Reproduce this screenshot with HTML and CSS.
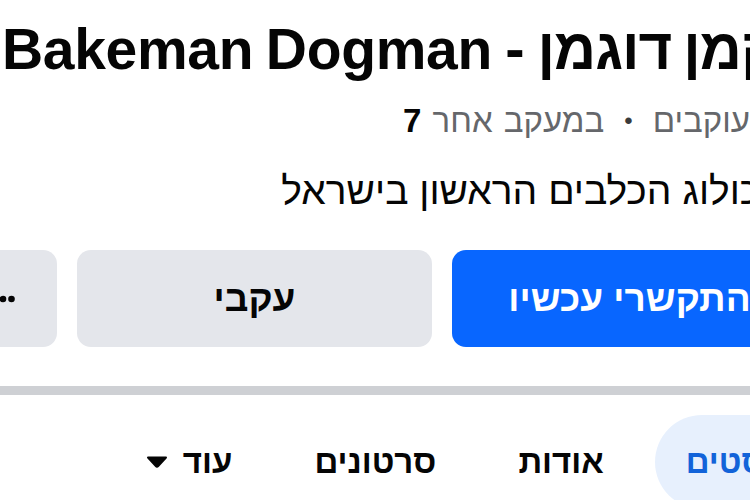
FILE: index.html
```html
<!DOCTYPE html>
<html lang="he">
<head>
<meta charset="utf-8">
<title>Bakeman Dogman</title>
<link rel="stylesheet" href="styles.css">
</head>
<body>
<div class="page">
  <h1 class="name"><span class="name-he">בייקמן דוגמן</span> - <span class="name-en">Bakeman Dogman</span></h1>
  <p class="stats"><b>8.4</b> עוקבים<span class="dot">•</span>במעקב אחר <b>7</b></p>
  <p class="bio">הכולוג הכלבים הראשון בישראל</p>
  <div class="actions">
    <button class="btn primary">התקשרי עכשיו</button>
    <button class="btn secondary">עקבי</button>
    <button class="btn more" aria-label="עוד">
      <svg class="dots" width="24" height="8" viewBox="0 0 24 8"><circle cx="3.5" cy="4" r="3.3"/><circle cx="12" cy="4" r="3.3"/><circle cx="20.5" cy="4" r="3.3"/></svg>
    </button>
  </div>
</div>
<div class="divider"></div>
<nav class="tabs">
  <span class="tab active">פוסטים</span>
  <span class="tab">אודות</span>
  <span class="tab">סרטונים</span>
  <span class="tab">עוד<svg class="caret" width="22" height="12" viewBox="0 0 22 12"><path d="M2 1.5 H20 L12.2 10 Q11 11.3 9.8 10 Z" stroke="#050505" stroke-width="2" stroke-linejoin="round"/></svg></span>
</nav>
</body>
</html>
```

FILE: styles.css
```css
html, body {
  margin: 0;
  padding: 0;
  background: #ffffff;
  overflow: hidden;
}

body {
  font-family: "Liberation Sans", Arial, "DejaVu Sans", sans-serif;
  color: #050505;
}

.page {
  direction: rtl;
  margin-right: -57px;
}

.name {
  margin: 16px -40px 0 0;
  font-size: 58px;
  line-height: 66px;
  font-weight: 700;
  word-spacing: -3px;
  white-space: nowrap;
}

.name-he {
  letter-spacing: -1px;
}

.name-en {
  font-size: 57px;
  letter-spacing: -0.3px;
}

.stats {
  margin: 19px 0 0;
  font-size: 33px;
  line-height: 40px;
  word-spacing: 2px;
  color: #65676b;
  white-space: nowrap;
}

.stats b {
  color: #050505;
}

.dot {
  margin: 0 20px;
  font-size: 24px;
  color: #3a3b3c;
  vertical-align: 3px;
}

.bio {
  margin: 27px 0 0;
  padding-right: 22px;
  font-size: 39px;
  line-height: 46px;
  white-space: nowrap;
}

.actions {
  display: flex;
  gap: 20px;
  margin-top: 36px;
}

.btn {
  flex: 0 0 355px;
  height: 97px;
  border: 0;
  border-radius: 14px;
  padding: 0;
  display: flex;
  align-items: center;
  justify-content: center;
  font-family: "Liberation Sans", Arial, sans-serif;
  font-weight: 700;
  font-size: 37px;
}

.primary {
  background: #0866ff;
  color: #ffffff;
}

.secondary {
  background: #e4e6eb;
  color: #050505;
}

.more {
  flex-basis: 108px;
  background: #e4e6eb;
}

.dots {
  fill: #050505;
}

.divider {
  height: 9px;
  margin-top: 39px;
  background: #ced0d4;
}

.tabs {
  direction: rtl;
  display: flex;
  gap: 20px;
  margin: 20px -77px 0 0;
}

.tab {
  height: 94px;
  padding: 0 31px;
  display: flex;
  align-items: center;
  gap: 15px;
  border-radius: 47px;
  font-size: 33px;
  font-weight: 700;
  color: #050505;
}

.tab.active {
  background: #e7f0fd;
  color: #1263d9;
}

.caret {
  fill: #050505;
}
```
